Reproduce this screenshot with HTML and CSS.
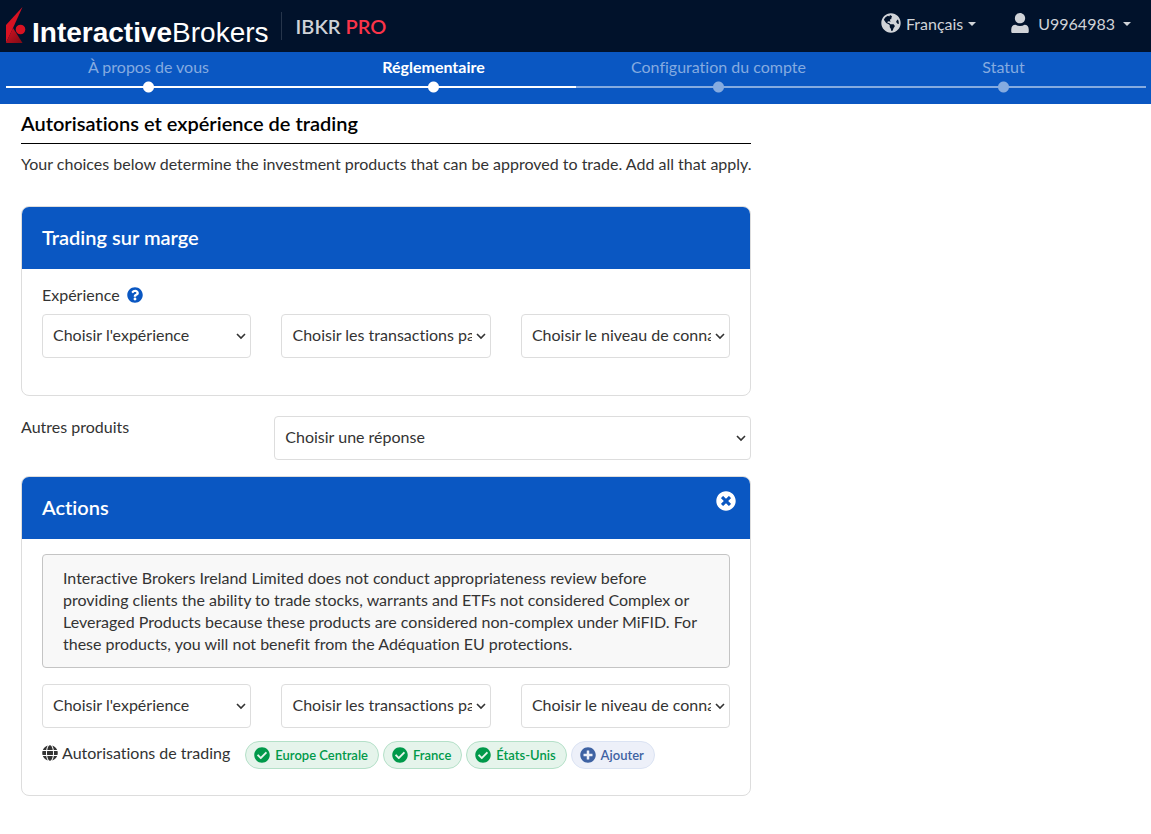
FILE: index.html
```html
<!DOCTYPE html>
<html lang="fr">
  <head>
    <meta charset="UTF-8" />
    <meta name="viewport" content="width=device-width, initial-scale=1.0" />
    <title>Interactive Brokers</title>
    <link rel="stylesheet" href="styles.css">
  </head>
  <body>
    <header class="topbar">
      <a class="brand" href="#">
        <svg class="brand-mark" viewBox="0 0 20 36" aria-hidden="true">
          <defs>
            <linearGradient id="shade" x1="0" y1="0" x2="1" y2="1">
              <stop offset="0" stop-color="#d81222" />
              <stop offset="1" stop-color="#7d0b16" />
            </linearGradient>
          </defs>
          <path fill="#d81222" d="M16.500 0L0 18v18l7-15z" />
          <path fill="url(#shade)" d="M7 21L0 36h16.500z" />
          <circle cx="14.500" cy="22.500" r="4.800" fill="#d81222" />
        </svg>
        <span class="brand-name"><b>Interactive</b>Brokers</span>
      </a>
      <span class="product">IBKR <em>PRO</em></span>
      <nav class="user-nav">
        <button class="nav-button" type="button">
          <svg class="icon-20" viewBox="0 0 496 512" aria-hidden="true"><path fill="currentColor" d="M248 8C111.030 8 0 119.030 0 256s111.030 248 248 248 248-111.030 248-248S384.970 8 248 8zm82.290 357.600c-3.900 3.880-7.990 7.950-11.310 11.280-2.990 3-5.100 6.700-6.170 10.710-1.510 5.660-2.730 11.380-4.770 16.870l-17.390 46.850c-13.760 3-28 4.690-42.650 4.690v-27.380c1.690-12.620-7.640-36.260-22.630-51.250-6-6-9.370-14.140-9.370-22.630v-32.010c0-11.640-6.270-22.340-16.460-27.970-14.370-7.950-34.810-19.060-48.810-26.110-11.480-5.780-22.100-13.140-31.650-21.750l-.8-.72a114.792 114.792 0 0 1-18.060-20.740c-9.380-13.770-24.660-36.420-34.590-51.140 20.470-45.500 57.360-82.040 103.200-101.890l24.010 12.010C203.480 89.740 216 82.010 216 70.110v-11.300c7.990-1.290 16.120-2.110 24.390-2.420l28.300 28.300c6.250 6.250 6.250 16.380 0 22.630L264 112l-10.340 10.340c-3.120 3.120-3.120 8.190 0 11.310l4.690 4.690c3.120 3.120 3.120 8.190 0 11.310l-8 8a8.008 8.008 0 0 1-5.660 2.340h-8.990c-2.080 0-4.080.81-5.580 2.270l-9.920 9.650a8.008 8.008 0 0 0-1.580 9.310l15.590 31.190c2.660 5.320-1.210 11.580-7.150 11.580h-5.640c-1.930 0-3.790-.7-5.240-1.960l-9.280-8.060a16.017 16.017 0 0 0-15.550-3.100l-31.170 10.390a11.950 11.950 0 0 0-8.170 11.340c0 4.530 2.560 8.660 6.610 10.690l11.080 5.540c9.410 4.710 19.790 7.160 30.310 7.160s22.590 27.290 32 32h66.750c8.490 0 16.620 3.370 22.630 9.370l13.690 13.690a30.503 30.503 0 0 1 8.930 21.570 46.536 46.536 0 0 1-13.720 32.980zM417 274.250c-5.790-1.450-10.840-5-14.150-9.970l-17.980-26.970a23.970 23.970 0 0 1 0-26.620l19.590-29.380c2.320-3.470 5.500-6.290 9.240-8.150l12.980-6.490C440.200 193.590 448 223.870 448 256c0 8.670-.74 17.160-1.820 25.540L417 274.250z" /></svg>
          <span>Français</span>
          <i class="caret"></i>
        </button>
        <button class="nav-button account" type="button">
          <svg class="icon-20" viewBox="0 0 448 512" aria-hidden="true"><path fill="currentColor" d="M224 264c73 0 132-59 132-132S297 0 224 0 92 59 92 132s59 132 132 132zM108 300C40 300 0 350 0 424v48c0 24 16 40 40 40h368c24 0 40-16 40-40v-48c0-74-40-124-108-124-34 20-72 30-116 30s-82-10-116-30z" /></svg>
          <span>U9964983</span>
          <i class="caret"></i>
        </button>
      </nav>
    </header>

    <ol class="steps">
      <li class="step done">À propos de vous</li>
      <li class="step done current">Réglementaire</li>
      <li class="step">Configuration du compte</li>
      <li class="step">Statut</li>
    </ol>

    <main class="content">
      <h1>Autorisations et expérience de trading</h1>
      <p class="intro">Your choices below determine the investment products that can be approved to trade. Add all that apply.</p>

      <section class="card">
        <div class="card-header">
          <h2>Trading sur marge</h2>
        </div>
        <div class="card-body margin-body">
          <div class="field-title">
            <span>Expérience</span>
            <button class="icon-button help" type="button" aria-label="Aide">
              <svg class="icon-16" viewBox="0 0 512 512" aria-hidden="true"><path fill="currentColor" d="M504 256c0 136.997-111.043 248-248 248S8 392.997 8 256C8 119.083 119.043 8 256 8s248 111.083 248 248zM262.655 90c-54.497 0-89.255 22.957-116.549 63.758-3.536 5.286-2.353 12.415 2.715 16.258l34.699 26.310c5.205 3.947 12.621 3.008 16.665-2.122 17.864-22.658 30.113-35.797 57.303-35.797 20.429 0 45.698 13.148 45.698 32.958 0 14.976-12.363 22.667-32.534 33.976C247.128 238.528 216 254.941 216 296v4c0 6.627 5.373 12 12 12h56c6.627 0 12-5.373 12-12v-1.333c0-28.462 83.186-29.647 83.186-106.667 0-58.002-60.165-102-116.531-102zM256 338c-25.365 0-46 20.635-46 46 0 25.364 20.635 46 46 46s46-20.636 46-46c0-25.365-20.635-46-46-46z" /></svg>
            </button>
          </div>
          <div class="select-row">
            <select class="select" aria-label="Expérience"><option>Choisir l'expérience</option></select>
            <select class="select" aria-label="Transactions par an"><option>Choisir les transactions par an</option></select>
            <select class="select" aria-label="Niveau de connaissance"><option>Choisir le niveau de connaissance</option></select>
          </div>
        </div>
      </section>

      <div class="other-products">
        <label for="products">Autres produits</label>
        <select class="select" id="products"><option>Choisir une réponse</option></select>
      </div>

      <section class="card">
        <div class="card-header">
          <h2>Actions</h2>
          <button class="icon-button close" type="button" aria-label="Supprimer">
            <svg class="icon-20" viewBox="0 0 512 512" aria-hidden="true"><path fill="currentColor" d="M256 8C119 8 8 119 8 256s111 248 248 248 248-111 248-248S393 8 256 8zm121.600 313.100c4.700 4.700 4.700 12.300 0 17L338 377.600c-4.700 4.700-12.300 4.700-17 0L256 312l-65.100 65.600c-4.700 4.700-12.300 4.700-17 0L134.400 338c-4.700-4.700-4.700-12.300 0-17l65.600-65-65.600-65.100c-4.700-4.700-4.700-12.300 0-17l39.600-39.600c4.700-4.700 12.300-4.700 17 0l65 65.700 65.100-65.600c4.700-4.700 12.300-4.700 17 0l39.600 39.600c4.700 4.700 4.700 12.300 0 17L312 256l65.600 65.100z" /></svg>
          </button>
        </div>
        <div class="card-body">
          <p class="notice">Interactive Brokers Ireland Limited does not conduct appropriateness review before providing clients the ability to trade stocks, warrants and ETFs not considered Complex or Leveraged Products because these products are considered non-complex under MiFID. For these products, you will not benefit from the Adéquation EU protections.</p>
          <div class="select-row">
            <select class="select" aria-label="Expérience"><option>Choisir l'expérience</option></select>
            <select class="select" aria-label="Transactions par an"><option>Choisir les transactions par an</option></select>
            <select class="select" aria-label="Niveau de connaissance"><option>Choisir le niveau de connaissance</option></select>
          </div>
          <div class="permissions">
            <span class="permissions-title">
              <svg class="icon-16" viewBox="0 0 496 512" aria-hidden="true"><path fill="currentColor" d="M336.500 160C322 70.700 287.800 8 248 8s-74 62.700-88.500 152h177zM152 256c0 22.200 1.200 43.500 3.300 64h185.300c2.100-20.500 3.300-41.800 3.300-64s-1.200-43.500-3.300-64H155.300c-2.100 20.500-3.300 41.800-3.300 64zm324.700-96c-28.600-67.900-86.500-120.400-158-141.600 24.400 33.800 41.200 84.700 50 141.600h108zM177.200 18.400C105.800 39.600 47.800 92.100 19.300 160h108c8.700-56.900 25.500-107.800 49.900-141.600zM487.400 192H372.700c2.100 21 3.300 42.500 3.300 64s-1.200 43-3.300 64h114.600c5.500-20.500 8.600-41.800 8.600-64s-3.100-43.500-8.500-64zM120 256c0-21.500 1.200-43 3.300-64H8.600C3.200 212.500 0 233.800 0 256s3.200 43.500 8.600 64h114.600c-2-21-3.200-42.500-3.200-64zm39.500 96c14.500 89.300 48.700 152 88.500 152s74-62.700 88.500-152h-177zm159.300 141.600c71.400-21.200 129.400-73.700 158-141.600h-108c-8.800 56.900-25.600 107.800-50 141.600zM19.300 352c28.600 67.900 86.500 120.400 158 141.600-24.400-33.800-41.200-84.700-50-141.600h-108z" /></svg>
              Autorisations de trading
            </span>
            <div class="tags">
              <button class="tag" type="button"><svg class="icon-16" viewBox="0 0 512 512" aria-hidden="true"><use href="#check" /></svg>Europe Centrale</button>
              <button class="tag" type="button"><svg class="icon-16" viewBox="0 0 512 512" aria-hidden="true"><use href="#check" /></svg>France</button>
              <button class="tag" type="button"><svg class="icon-16" viewBox="0 0 512 512" aria-hidden="true"><use href="#check" /></svg>États-Unis</button>
              <button class="tag add" type="button"><svg class="icon-16" viewBox="0 0 512 512" aria-hidden="true"><path fill="currentColor" d="M256 8C119 8 8 119 8 256s111 248 248 248 248-111 248-248S393 8 256 8zm144 276c0 6.600-5.400 12-12 12h-92v92c0 6.600-5.400 12-12 12h-56c-6.600 0-12-5.400-12-12v-92h-92c-6.600 0-12-5.400-12-12v-56c0-6.600 5.400-12 12-12h92v-92c0-6.600 5.400-12 12-12h56c6.600 0 12 5.400 12 12v92h92c6.600 0 12 5.400 12 12v56z" /></svg>Ajouter</button>
            </div>
          </div>
        </div>
      </section>
    </main>

    <svg class="sprite" width="0" height="0" aria-hidden="true">
      <symbol id="check" viewBox="0 0 512 512"><path fill="currentColor" d="M504 256c0 136.967-111.033 248-248 248S8 392.967 8 256 119.033 8 256 8s248 111.033 248 248zM227.314 387.314l184-184c6.248-6.248 6.248-16.379 0-22.627l-22.627-22.627c-6.248-6.249-16.379-6.249-22.628 0L216 308.118l-70.059-70.059c-6.248-6.248-16.379-6.248-22.628 0l-22.627 22.627c-6.248 6.248-6.248 16.379 0 22.627l104 104c6.249 6.249 16.379 6.249 22.628.001z" /></symbol>
    </svg>
  </body>
</html>
```
FILE: styles.css
```css
* {
  box-sizing: border-box;
}

body {
  margin: 0;
  font-family: Lato, "Liberation Sans", sans-serif;
  font-size: 16px;
  line-height: 22px;
  font-variant-ligatures: none;
  color: #333;
  background: #fff;
}

button,
select {
  font: inherit;
  font-variant-ligatures: none;
  color: inherit;
}

button {
  border: none;
  background: none;
  padding: 0;
  cursor: pointer;
}

h1,
h2,
p {
  margin: 0;
}

svg {
  display: block;
  flex: none;
}

.icon-16 {
  width: 16px;
  height: 16px;
}

.icon-20 {
  width: 20px;
  height: 20px;
}

.sprite {
  position: absolute;
}

/* top bar */
.topbar {
  display: flex;
  align-items: center;
  height: 52px;
  padding: 0 20px 0 6px;
  background: #01122b;
  color: #d0d3d8;
}

.brand {
  display: flex;
  align-items: flex-end;
  gap: 6px;
  padding-bottom: 2px;
  color: #fff;
  text-decoration: none;
}

.brand-mark {
  width: 20px;
  height: 36px;
}

.brand-name {
  font-family: "Liberation Sans", Arial, sans-serif;
  font-size: 28px;
  line-height: 20px;
}

.product {
  margin-left: 12px;
  padding: 3px 0 3px 14px;
  border-left: 1px solid #26354b;
  font-size: 20px;
  font-weight: 600;
}

.product em {
  font-style: normal;
  color: #fb3449;
}

.user-nav {
  display: flex;
  gap: 34px;
  margin-left: auto;
  padding-bottom: 4px;
}

.nav-button {
  display: flex;
  align-items: flex-start;
  gap: 5px;
}

.account {
  gap: 8px;
}

.caret {
  align-self: center;
  border: 4px solid transparent;
  border-top-color: currentColor;
  border-bottom: 0;
}

/* progress */
.steps {
  display: grid;
  grid-template-columns: repeat(4, 1fr);
  height: 52px;
  margin: 0;
  padding: 4px 5px 0 6px;
  list-style: none;
  background: #0a57c2;
}

.step {
  display: flex;
  flex-direction: column;
  align-items: center;
  color: #85abe0;
}

/* each step draws its share of the line, with the dot on top of it */
.step::after {
  content: "";
  width: 100%;
  height: 12px;
  margin-top: 3px;
  background:
    radial-gradient(circle, currentColor 5px, transparent 6px),
    linear-gradient(currentColor, currentColor) center / 100% 2px no-repeat;
}

.step.done::after {
  color: #fff;
}

.step.current {
  color: #fff;
  font-weight: 700;
}

/* page */
.content {
  width: 66.667%;
  padding: 7px 16px 32px 21px;
}

h1 {
  padding-bottom: 8px;
  border-bottom: 1px solid #000;
  font-size: 20px;
  line-height: 24px;
  font-weight: 600;
  color: #000;
}

h2 {
  font-size: 20px;
  line-height: 24px;
  font-weight: 600;
}

.intro {
  padding: 9px 0 31px;
}

@media (min-width: 1100px) {
  .intro {
    white-space: nowrap;
  }
}

.card {
  border: 1px solid #ddd;
  border-radius: 8px;
  overflow: hidden;
}

.card-header {
  display: flex;
  justify-content: space-between;
  height: 62px;
  padding: 18px 14px 0 20px;
  background: #0a57c2;
  color: #fff;
}

.card-body {
  padding: 15px 20px 26px;
}

.margin-body {
  padding-bottom: 37px;
}

.field-title {
  display: flex;
  align-items: center;
  gap: 7px;
  margin-bottom: 8px;
}

.help {
  color: #0a57c2;
}

.close {
  align-self: flex-start;
  margin-top: -4px;
}

.select-row {
  display: grid;
  grid-template-columns: repeat(3, minmax(0, 1fr));
  gap: 30px;
}

.select {
  appearance: none;
  width: 100%;
  height: 44px;
  padding: 0 18px 2px 10px;
  border: 1px solid #ddd;
  border-radius: 4px;
  background: #fff url("data:image/svg+xml,%3Csvg xmlns='http://www.w3.org/2000/svg' width='10' height='7' viewBox='0 0 10 7'%3E%3Cpath d='M1 1l4 4 4-4' fill='none' stroke='%23333' stroke-width='1.6'/%3E%3C/svg%3E") right 4px center no-repeat;
}

.other-products {
  display: grid;
  grid-template-columns: 1fr 477px;
  margin: 20px 0 16px;
}

.notice {
  margin-bottom: 16px;
  padding: 12px 20px;
  border: 1px solid #c4c4c4;
  border-radius: 4px;
  background: #f8f8f8;
}

.permissions {
  display: flex;
  gap: 15px;
  margin-top: 13px;
}

.permissions-title {
  display: flex;
  align-items: center;
  gap: 4px;
  height: 24px;
}

.tags {
  display: flex;
  flex-wrap: wrap;
  gap: 4px;
}

.tag {
  display: flex;
  align-items: center;
  gap: 5px;
  height: 28px;
  padding: 0 10px 0 8px;
  border: 1px solid #b4e0c8;
  border-radius: 14px;
  background: #e5f4eb;
  color: #00994a;
  font-size: 13px;
  font-weight: 600;
}

.tag.add {
  border-color: #dbe3f3;
  background: #edf0f9;
  color: #3e62a3;
}
```
